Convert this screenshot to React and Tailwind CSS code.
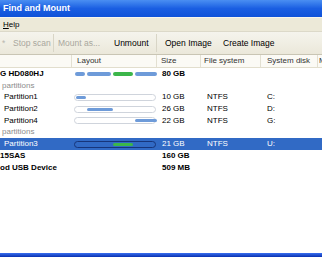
import React from 'react';

const FONT = { fontFamily: '"Liberation Sans", Arial, sans-serif' };

const rows = [
  { kind: 'disk', name: 'G HD080HJ', size: '80 GB', segs: true },
  { kind: 'group', name: 'partitions' },
  { kind: 'part', name: 'Partition1', size: '10 GB', fs: 'NTFS', disk: 'C:', fill: [1, 10] },
  { kind: 'part', name: 'Partition2', size: '26 GB', fs: 'NTFS', disk: 'D:', fill: [12, 26] },
  { kind: 'part', name: 'Partition4', size: '22 GB', fs: 'NTFS', disk: 'G:', fill: [60, 22] },
  { kind: 'group', name: 'partitions' },
  { kind: 'part', name: 'Partition3', size: '21 GB', fs: 'NTFS', disk: 'U:', fill: [38, 20], selected: true },
  { kind: 'disk', name: '15SAS', size: '160 GB' },
  { kind: 'disk', name: 'od USB Device', size: '509 MB' },
];

function DiskSegments() {
  return (
    <div className="flex items-center gap-[2px] pl-[3px]">
      <div className="h-[4px] w-[10px] rounded-full bg-[#6e9bd9]" />
      <div className="h-[4px] w-[24px] rounded-full bg-[#6e9bd9]" />
      <div className="h-[4px] w-[20px] rounded-full bg-[#3cb64a]" />
      <div className="h-[4px] w-[22px] rounded-full bg-[#6e9bd9]" />
    </div>
  );
}

function PartBar({ fill, selected }) {
  return (
    <div className="pl-[2px] pr-[1px]">
      <div
        className={`relative h-[7px] rounded-full border ${
          selected ? 'border-[#17357a] bg-[#316ac5]' : 'border-[#cfd4dc] bg-white'
        }`}
      >
        <div
          className={`absolute top-[1px] h-[3px] rounded-full ${selected ? 'bg-[#3cb64a]' : 'bg-[#6e9bd9]'}`}
          style={{ left: fill[0], width: fill[1] }}
        />
      </div>
    </div>
  );
}

const GRID = 'grid grid-cols-[72px_85px_44px_60px_57px_1fr]';

export default function App() {
  return (
    <div className="w-[322px] h-[257px] flex flex-col bg-white overflow-hidden text-[8px] text-black" style={FONT}>
      {/* Title bar */}
      <div className="h-[17px] shrink-0 bg-gradient-to-b from-[#4a8ef2] via-[#1a5ee2] to-[#0f52d8] flex items-center px-[3px]">
        <span className="text-white font-bold text-[9px]">Find and Mount</span>
      </div>

      {/* Menu */}
      <div className="h-[14px] shrink-0 bg-[#ece9d8] border-t border-[#f7f5ec] flex items-center px-[3px]">
        <span><span className="underline">H</span>elp</span>
      </div>

      {/* Toolbar */}
      <div className="h-[24px] shrink-0 bg-gradient-to-b from-[#f5f4ed] to-[#ebe8da] border-t border-[#dcd9c9] border-b border-b-[#c9c5b4] flex items-center text-[8.5px]">
        <span className="w-[13px] pl-[2px] text-[#b8b6ad]">*</span>
        <span className="text-[#a9a79d] w-[40px]">Stop scan</span>
        <div className="h-[18px] w-px bg-[#d8d5c6]" />
        <span className="text-[#a9a79d] pl-[4px] w-[60px]">Mount as...</span>
        <span className="w-[42px]">Unmount</span>
        <div className="h-[18px] w-px bg-[#d8d5c6]" />
        <span className="pl-[8px] w-[66px]">Open Image</span>
        <span>Create Image</span>
      </div>

      {/* Header */}
      <div className={`${GRID} h-[13px] shrink-0 bg-[#fbfaf5] border-b border-[#e2decd] text-[#333]`}>
        <div className="border-r border-[#e3e0d2]" />
        <div className="border-r border-[#e3e0d2] pl-[5px] leading-[12px]">Layout</div>
        <div className="border-r border-[#e3e0d2] pl-[4px] leading-[12px]">Size</div>
        <div className="border-r border-[#e3e0d2] pl-[3px] leading-[12px]">File system</div>
        <div className="border-r border-[#e3e0d2] pl-[6px] leading-[12px]">System disk</div>
        <div className="pl-[1px] leading-[12px] overflow-hidden">M</div>
      </div>

      {/* Rows */}
      <div className="flex flex-col">
        {rows.map((r, i) => (
          <div
            key={i}
            className={`${GRID} h-[11.7px] items-center whitespace-nowrap ${
              r.selected ? 'bg-[#316ac5] text-white' : ''
            } ${r.kind === 'disk' ? 'font-bold' : ''}`}
          >
            <div
              className={`overflow-hidden ${
                r.kind === 'group' ? 'pl-[2px] text-[#8c8c8c]' : r.kind === 'part' ? 'pl-[4px]' : ''
              }`}
            >
              {r.name}
            </div>
            <div>
              {r.segs && <DiskSegments />}
              {r.fill && <PartBar fill={r.fill} selected={r.selected} />}
            </div>
            <div className="pl-[5px]">{r.size}</div>
            <div className="pl-[6px]">{r.fs}</div>
            <div className="pl-[6px]">{r.disk}</div>
            <div />
          </div>
        ))}
      </div>

      <div className="flex-1" />
      <div className="h-[4px] shrink-0 bg-gradient-to-b from-[#3a6ff0] to-[#0a2fb0]" />
    </div>
  );
}
